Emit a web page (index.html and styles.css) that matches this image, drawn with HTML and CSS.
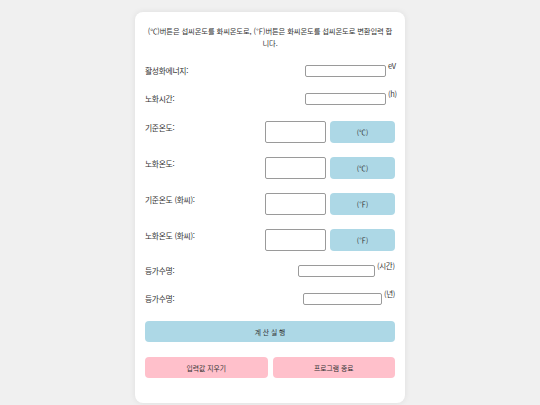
FILE: index.html
```html
<!DOCTYPE html>
<html lang="ko">
<head>
<meta charset="utf-8">
<title>노화 계산</title>
<link rel="stylesheet" href="styles.css">
</head>
<body>
<div class="card">
  <p class="intro">(℃)버튼은 섭씨온도를 화씨온도로, (℉)버튼은 화씨온도를 섭씨온도로 변환입력 합니다.</p>

  <div class="row">
    <span class="label">활성화에너지:</span>
    <span class="group"><input class="in-a" type="text"><span class="unit">eV</span></span>
  </div>
  <div class="row">
    <span class="label">노화시간:</span>
    <span class="group"><input class="in-a" type="text"><span class="unit">(h)</span></span>
  </div>

  <div class="row temp">
    <span class="label">기준온도:</span>
    <span class="group"><input class="in-t" type="text"><button class="btn-blue conv">(℃)</button></span>
  </div>
  <div class="row temp">
    <span class="label">노화온도:</span>
    <span class="group"><input class="in-t" type="text"><button class="btn-blue conv">(℃)</button></span>
  </div>
  <div class="row temp">
    <span class="label">기준온도 (화씨):</span>
    <span class="group"><input class="in-t" type="text"><button class="btn-blue conv">(℉)</button></span>
  </div>
  <div class="row temp">
    <span class="label">노화온도 (화씨):</span>
    <span class="group"><input class="in-t" type="text"><button class="btn-blue conv">(℉)</button></span>
  </div>

  <div class="row">
    <span class="label">등가수명:</span>
    <span class="group"><input class="in-h" type="text"><span class="unit">(시간)</span></span>
  </div>
  <div class="row">
    <span class="label">등가수명:</span>
    <span class="group"><input class="in-y" type="text"><span class="unit">(년)</span></span>
  </div>

  <button class="btn-blue run">계 산 실 행</button>

  <div class="actions">
    <button class="btn-pink">입력값 지우기</button>
    <button class="btn-pink">프로그램 종료</button>
  </div>
</div>
</body>
</html>
```

FILE: styles.css
```css
html, body {
  margin: 0;
  padding: 0;
}
body {
  background: #f0f0f0;
  font-family: "Noto Sans CJK KR", "Liberation Sans", sans-serif;
  color: #333;
  width: 540px;
  height: 405px;
  overflow: hidden;
}
.card {
  box-sizing: border-box;
  width: 270px;
  height: 391px;
  margin: 12px auto 0;
  padding: 13px 10px 0 10px;
  background: #fff;
  border-radius: 8px;
  box-shadow: 0 0 6px rgba(0, 0, 0, 0.08);
}
.intro {
  margin: 0 0 16px 0;
  font-size: 7.3px;
  line-height: 12px;
  text-align: center;
  letter-spacing: -0.1px;
  word-break: break-all;
}
.row {
  display: flex;
  justify-content: space-between;
  align-items: center;
  height: 12px;
  margin-bottom: 16px;
  font-size: 7.8px;
  letter-spacing: -0.3px;
}
.row.temp {
  height: 22px;
  align-items: flex-start;
  margin-bottom: 14px;
}
.row.temp .label {
  margin-top: 1px;
}
.label {
  line-height: 12px;
}
.group {
  display: flex;
  align-items: flex-start;
  height: 100%;
}
input {
  box-sizing: border-box;
  margin: 0;
  padding: 0 2px;
  height: 12px;
  border: 1px solid #9a9a9a;
  border-radius: 2px;
  font-size: 7px;
  background: #fff;
}
.in-a { width: 81px; }
.in-h { width: 77px; }
.in-y { width: 79px; }
.in-t { width: 61px; height: 22px; }
.unit {
  margin-left: 2px;
  margin-top: -4px;
  font-size: 7.5px;
  line-height: 10px;
  width: 7px;
  white-space: nowrap;
}
.in-h + .unit { width: 18px; }
.in-y + .unit { width: 11px; }
button {
  font-family: "Noto Sans CJK KR", "Liberation Sans", sans-serif;
  font-size: 6.8px;
  color: #333;
  border: none;
  border-radius: 4px;
  margin: 0;
  padding: 0;
  cursor: pointer;
}
.btn-blue { background: #add8e6; }
.btn-pink { background: #ffc0cb; }
.conv {
  width: 65px;
  height: 22px;
  margin-left: 4px;
}
.run {
  display: block;
  width: 100%;
  height: 21px;
  margin-bottom: 15px;
}
.actions {
  display: flex;
  gap: 5px;
}
.actions .btn-pink {
  flex: 1;
  height: 21px;
}
```
